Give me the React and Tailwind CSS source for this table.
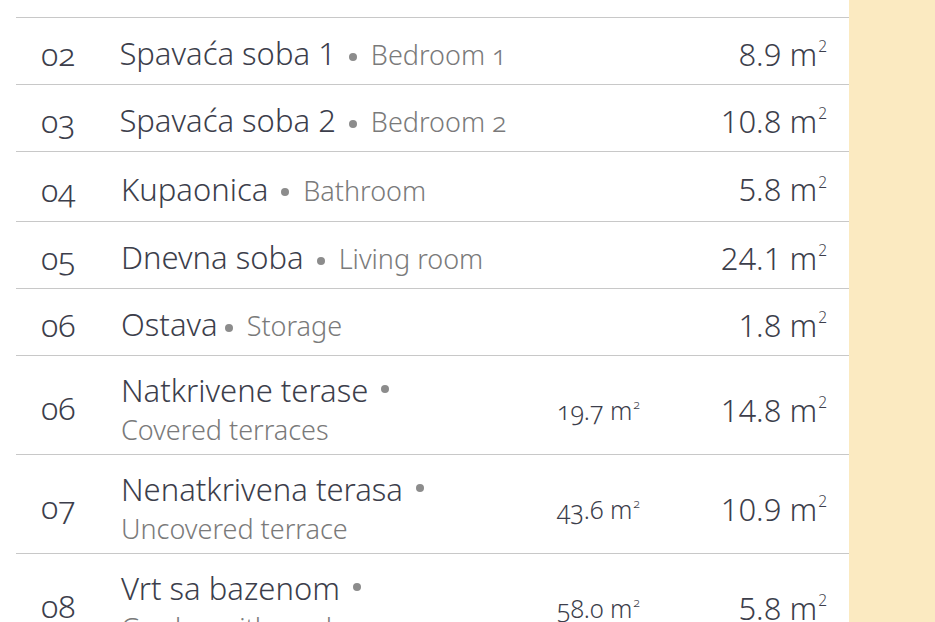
import React from 'react';

const rows = [
  { no: '02', hr: 'Spavaća soba 1', en: 'Bedroom 1', area: '8.9', h: 'h-[67px]' },
  { no: '03', hr: 'Spavaća soba 2', en: 'Bedroom 2', area: '10.8', h: 'h-[67px]' },
  { no: '04', hr: 'Kupaonica', en: 'Bathroom', area: '5.8', h: 'h-[70px]' },
  { no: '05', hr: 'Dnevna soba', en: 'Living room', area: '24.1', h: 'h-[67px]' },
  { no: '06', hr: 'Ostava', en: 'Storage', area: '1.8', h: 'h-[67px]', tight: true },
  { no: '06', hr: 'Natkrivene terase', en: 'Covered terraces', gross: '19.7', area: '14.8', h: 'h-[99px]', wrap: true },
  { no: '07', hr: 'Nenatkrivena terasa', en: 'Uncovered terrace', gross: '43.6', area: '10.9', h: 'h-[99px]', wrap: true },
  { no: '08', hr: 'Vrt sa bazenom', en: 'Garden with pool', gross: '58.0', area: '5.8', h: 'h-[99px]', wrap: true },
];

const Sq = () => (
  <sup className="text-[0.5em] top-[-0.85em] ml-[1px]">2</sup>
);

const Dot = ({ tight }) => (
  <span
    className={`inline-block w-2 h-2 rounded-full bg-[#8c8c8c] align-[0.28em] ${tight ? 'ml-[7px]' : 'ml-[13px]'} mr-[14px]`}
  />
);

export default function App() {
  return (
    <div className="flex h-[622px] overflow-hidden bg-white font-['Noto_Sans',sans-serif] text-[#3c3e4b]">
      {/* table */}
      <div className="w-[849px] pl-4 pt-[17px]">
        <div className="border-t border-[#c8c8c8]">
          {rows.map((r, i) => (
            <div key={i} className={`flex items-center border-b border-[#c8c8c8] pr-[22px] ${r.h}`}>
              <div className="w-[105px] pl-[25px] text-[32px] font-light oldstyle-nums leading-none pt-[6px]">
                {r.no}
              </div>
              <div className="flex-1 font-light">
                {r.wrap ? (
                  <div className="leading-[39px] pt-[10px]">
                    <div className="text-[31px]">
                      {r.hr}
                      <Dot />
                    </div>
                    <div className="text-[27px] text-[#7a7a7a]">{r.en}</div>
                  </div>
                ) : (
                  <div className="leading-none pt-[5px] whitespace-nowrap">
                    <span className="text-[31px]">{r.hr}</span>
                    <Dot tight={r.tight} />
                    <span className="text-[27px] text-[#7a7a7a] oldstyle-nums">{r.en}</span>
                  </div>
                )}
              </div>
              <div className="w-[140px] text-right text-[25px] font-light oldstyle-nums leading-none pt-[10px]">
                {r.gross && (
                  <>
                    {r.gross} m<Sq />
                  </>
                )}
              </div>
              <div className={`w-[187px] text-right text-[31px] font-light leading-none ${r.wrap ? 'pt-[10px]' : 'pt-[6px]'}`}>
                {r.area} m<Sq />
              </div>
            </div>
          ))}
        </div>
      </div>
      {/* side strip */}
      <div className="flex-1 bg-[#fbeac1]" />
    </div>
  );
}
